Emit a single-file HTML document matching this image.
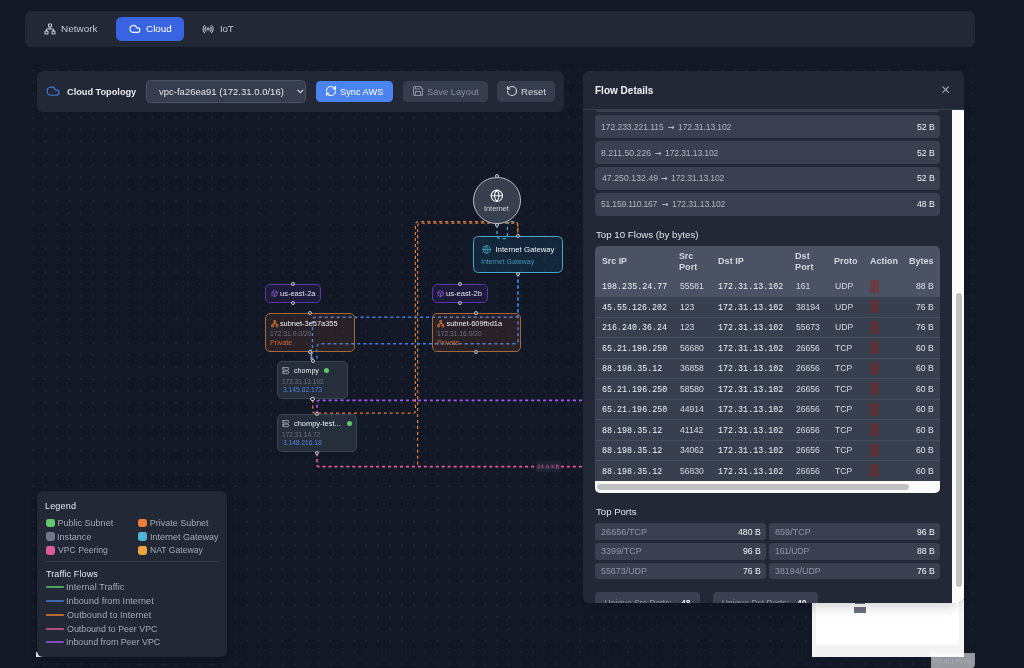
<!DOCTYPE html>
<html lang="en">
<head>
<meta charset="utf-8">
<title>Cloud Topology</title>
<style>
*{box-sizing:border-box;margin:0;padding:0}
html,body{width:1024px;height:668px;overflow:hidden;background:#121826}
body{position:relative;font-family:"Liberation Sans",sans-serif;color:#d1d5db}
#root{position:absolute;left:0;top:0;width:1024px;height:668px;will-change:transform}
.abs{position:absolute}
.t{position:absolute;white-space:nowrap;line-height:12px;height:12px}
.md{}
svg.ic{position:absolute;fill:none;stroke:currentColor;stroke-width:2.2;stroke-linecap:round;stroke-linejoin:round;overflow:visible}
#nav{left:25px;top:11px;width:950px;height:35.6px;background:#222836;border-radius:6px}
#cloudbtn{left:115.8px;top:16.8px;width:68.2px;height:24.2px;background:#3864e2;border-radius:5.5px}
#canvas{left:25px;top:70px;width:950px;height:598px;overflow:hidden}
#toolbar{left:36.7px;top:71px;width:527.6px;height:40.8px;background:#222836;border-radius:6px}
.btn{position:absolute;top:80.6px;height:21.3px;border-radius:4.5px;background:#363d4d}
#sel{left:146.2px;top:80.2px;width:160px;height:22.6px;background:#363d4d;border:1px solid #4a5162;border-radius:4.5px}
.node{position:absolute;border-radius:5px;border:1.2px solid}
.az{background:rgba(124,58,237,.10);border-color:#5d35a4;border-width:1.1px}
.sub{background:rgba(234,120,50,.10);border-color:#a2683d;border-width:1.1px}
.inst{background:#262d3b;border-color:#3b4354;border-width:1px}
.hd{position:absolute;width:4.2px;height:4.2px;border-radius:50%;background:#1b2130;border:0.85px solid #c8ccd4}
#legend{left:36.7px;top:491.1px;width:190.6px;height:165.9px;background:#222836;border-radius:6px;box-shadow:0 3px 6px rgba(4,6,12,.3)}
.sw{position:absolute;width:8.8px;height:8.8px;border-radius:2.4px}
.ln{position:absolute;left:45.8px;width:18.2px;height:1.5px;border-radius:1px}
#panel{left:583px;top:71px;width:380.8px;height:532px;background:#222836;border-radius:6px;overflow:hidden;box-shadow:0 11px 12px -8px rgba(4,6,12,.2)}
.row{position:absolute;left:595.3px;width:344.7px;height:22.5px;background:#3a4050;border-radius:4px}
.chip{position:absolute;height:16.5px;background:#3a4050;border-radius:3px}
</style>
</head>
<body>
<div id="root">
<!-- nav -->
<div id="nav" class="abs"></div>
<div id="cloudbtn" class="abs"></div>
<svg class="ic" style="left:43.50px;top:23.00px;color:#c3c8d1;stroke-width:2.3;" width="12" height="12" viewBox="0 0 24 24"><rect x="16" y="16" width="6" height="6" rx="1"/><rect x="2" y="16" width="6" height="6" rx="1"/><rect x="9" y="2" width="6" height="6" rx="1"/><path d="M5 16v-3a1 1 0 0 1 1-1h12a1 1 0 0 1 1 1v3"/><path d="M12 12V8"/></svg>
<span class="t" style="left:60.98px;top:22.52px;font-size:9.95px;color:#c3c8d1;transform:translateY(0.47px) rotate(.02deg);">Network</span>
<svg class="ic" style="left:128.50px;top:23.10px;color:#fff;stroke-width:2.3;" width="11.8" height="11.8" viewBox="0 0 24 24"><path d="M17.5 19H9a7 7 0 1 1 6.71-9h1.79a4.5 4.5 0 1 1 0 9Z"/></svg>
<span class="t" style="left:146.20px;top:22.52px;font-size:9.89px;color:#fff;transform:translateY(0.45px) rotate(.02deg);">Cloud</span>
<svg class="ic" style="left:202.00px;top:22.90px;color:#c3c8d1;stroke-width:2.0;" width="12.2" height="12.2" viewBox="0 0 24 24"><path d="M4.9 19.1C1 15.2 1 8.8 4.9 4.9"/><path d="M7.8 16.2c-2.3-2.3-2.3-6.1 0-8.5"/><circle cx="12" cy="12" r="2"/><path d="M16.2 7.8c2.3 2.3 2.3 6.1 0 8.5"/><path d="M19.1 4.9C23 8.8 23 15.1 19.1 19"/></svg>
<span class="t" style="left:219.90px;top:22.52px;font-size:9.8px;color:#c3c8d1;letter-spacing:-0.265px;transform:translateY(0.42px) rotate(.02deg);">IoT</span>
<!-- canvas -->
<div id="canvas" class="abs"><svg width="950" height="598" style="display:block"><defs><pattern id="dots" x="2.5" y="-6" width="11.886" height="11.886" patternUnits="userSpaceOnUse"><circle cx="5.94" cy="5.9" r="0.5" fill="#4c566e"/></pattern></defs><rect width="950" height="598" fill="url(#dots)"/></svg></div>
<!-- nodes -->
<svg class="abs" style="left:0;top:0" width="1024" height="668" fill="none" stroke-linecap="butt"><path d="M312.7,399.6 V411.2 Q312.7,413.2 314.7,413.2 H412.6 Q415.4,413.2 415.4,410.4 V224.9 Q415.4,221.7 418.6,221.7 H514.6 Q517.8,221.7 517.8,224.9 V235.7" stroke="#de7f35" stroke-width="1.25" stroke-dasharray="3.1 2.86" /><path d="M417.6,465 V226.2 Q417.6,223 420.8,223 H514.5 Q517.7,223 517.7,226.2 V235.7" stroke="#de7f35" stroke-width="1.25" stroke-dasharray="3.1 2.86" stroke-dashoffset="-0.3" /><path d="M497,225 V235.4 Q497,238.6 500.2,238.6 H504.2 Q507.4,238.6 507.4,235.4 V225.3 Q507.4,222.1 510.6,222.1 H514.5" stroke="#46a9c9" stroke-width="1.3" stroke-dasharray="3.1 2.86" /><path d="M518,273.6 V314 Q518,317.2 514.8,317.2 H315.7 Q312.5,317.2 312.5,320.4 V360.3" stroke="#467dd7" stroke-width="1.45" stroke-dasharray="3.1 2.86" /><path d="M518,273.6 V340.6 Q518,343.8 514.8,343.8 H320.2 Q317,343.8 317,347 V357 Q317,359.5 314.5,359.5" stroke="#467dd7" stroke-width="1.45" stroke-dasharray="3.1 2.86" /><path d="M311.3,349.5 V360" stroke="#8d93a0" stroke-width="1.7"  /><path d="M317,413.8 V402.3 Q317,400.3 319,400.3 H600" stroke="#a259ea" stroke-width="1.7" stroke-dasharray="3.1 2.86" /><path d="M317,453.1 V464.7 Q317,466.7 319,466.7 H600" stroke="#e15aa0" stroke-width="1.7" stroke-dasharray="3.1 2.86" /></svg>
<div class="abs" style="left:536.1px;top:461px;width:24.7px;height:11.2px;background:rgba(30,38,53,.88);border-radius:1.5px"></div>
<span class="t" style="left:537.30px;top:460.02px;font-size:6px;color:#c85596;letter-spacing:0.195px;transform:translateY(0.66px) rotate(.02deg);">24.6 KB</span>
<div class="abs" style="left:473.2px;top:177.1px;width:47.4px;height:47.4px;border-radius:50%;background:#383f4f;border:1.3px solid #b9bdc6"></div>
<svg class="ic" style="left:490.20px;top:189.10px;color:#f3f4f6;stroke-width:1.9;" width="13.6" height="13.6" viewBox="0 0 24 24"><circle cx="12" cy="12" r="10"/><path d="M2 12h20"/><path d="M12 2a15.3 15.3 0 0 1 4 10 15.3 15.3 0 0 1-4 10 15.3 15.3 0 0 1-4-10 15.3 15.3 0 0 1 4-10z"/></svg>
<span class="t" style="left:484.22px;top:201.52px;font-size:7.32px;color:#cfd3da;transform:translateY(0.92px) rotate(.02deg);">Internet</span>
<div class="hd" style="left:494.90px;top:174.30px"></div>
<div class="hd" style="left:494.90px;top:222.90px"></div>
<div class="node " style="left:473.30px;top:236.20px;width:90.00px;height:36.80px;background:rgba(40,150,190,.13);border-color:#46a9c9;border-width:1.6px;border-radius:5.5px"></div>
<svg class="ic" style="left:481.90px;top:244.90px;color:#46a9c9;stroke-width:2.0;" width="9" height="9" viewBox="0 0 24 24"><circle cx="12" cy="12" r="10"/><path d="M2 12h20"/><path d="M12 2a15.3 15.3 0 0 1 4 10 15.3 15.3 0 0 1-4 10 15.3 15.3 0 0 1-4-10 15.3 15.3 0 0 1 4-10z"/></svg>
<span class="t" style="left:495.48px;top:243.52px;font-size:7.76px;color:#eef0f3;">Internet Gateway</span>
<span class="t" style="left:481.15px;top:254.52px;font-size:6.99px;color:#3b93b8;transform:translateY(0.60px) rotate(.02deg);">Internet Gateway</span>
<div class="hd" style="left:515.90px;top:233.90px"></div>
<div class="hd" style="left:515.90px;top:271.70px"></div>
<div class="node az" style="left:265.20px;top:284.00px;width:55.40px;height:18.80px;"></div>
<svg class="ic" style="left:270.70px;top:289.80px;color:#9b63ea;stroke-width:2.3;" width="7.2" height="7.2" viewBox="0 0 24 24"><path d="M21 8a2 2 0 0 0-1-1.73l-7-4a2 2 0 0 0-2 0l-7 4A2 2 0 0 0 3 8v8a2 2 0 0 0 1 1.73l7 4a2 2 0 0 0 2 0l7-4A2 2 0 0 0 21 16Z"/><path d="m3.3 7 8.7 5 8.7-5"/><path d="M12 22V12"/></svg>
<span class="t" style="left:279.61px;top:287.52px;font-size:7.53px;color:#e6e2f3;transform:translateY(0.09px) rotate(.02deg);">us-east-2a</span>
<div class="hd" style="left:290.60px;top:281.50px"></div>
<div class="hd" style="left:290.60px;top:301.20px"></div>
<div class="node az" style="left:431.80px;top:284.00px;width:55.90px;height:18.80px;"></div>
<svg class="ic" style="left:437.30px;top:289.80px;color:#9b63ea;stroke-width:2.3;" width="7.2" height="7.2" viewBox="0 0 24 24"><path d="M21 8a2 2 0 0 0-1-1.73l-7-4a2 2 0 0 0-2 0l-7 4A2 2 0 0 0 3 8v8a2 2 0 0 0 1 1.73l7 4a2 2 0 0 0 2 0l7-4A2 2 0 0 0 21 16Z"/><path d="m3.3 7 8.7 5 8.7-5"/><path d="M12 22V12"/></svg>
<span class="t" style="left:446.41px;top:287.52px;font-size:7.6px;color:#e6e2f3;transform:translateY(0.11px) rotate(.02deg);">us-east-2b</span>
<div class="hd" style="left:457.50px;top:281.50px"></div>
<div class="hd" style="left:457.50px;top:301.20px"></div>
<div class="node sub" style="left:265.20px;top:313.30px;width:89.50px;height:38.60px;"></div>
<svg class="ic" style="left:270.50px;top:319.70px;color:#d27735;stroke-width:2.9;" width="7.6" height="7.6" viewBox="0 0 24 24"><rect x="16" y="16" width="6" height="6" rx="1"/><rect x="2" y="16" width="6" height="6" rx="1"/><rect x="9" y="2" width="6" height="6" rx="1"/><path d="M5 16v-3a1 1 0 0 1 1-1h12a1 1 0 0 1 1 1v3"/><path d="M12 12V8"/></svg>
<span class="t" style="left:279.89px;top:317.52px;font-size:7.41px;color:#eef0f3;">subnet-3e57a355</span>
<span class="t" style="left:270.28px;top:327.52px;font-size:6.8px;color:#6c7283;transform:translateY(0.34px) rotate(.02deg);">172.31.0.0/20</span>
<span class="t" style="left:270.21px;top:337.02px;font-size:7.17px;color:#c86a32;transform:translateY(0.27px) rotate(.02deg);">Private</span>
<div class="hd" style="left:307.70px;top:310.90px"></div>
<div class="hd" style="left:307.70px;top:349.90px"></div>
<div class="node sub" style="left:431.80px;top:313.30px;width:88.90px;height:38.60px;"></div>
<svg class="ic" style="left:437.10px;top:319.70px;color:#d27735;stroke-width:2.9;" width="7.6" height="7.6" viewBox="0 0 24 24"><rect x="16" y="16" width="6" height="6" rx="1"/><rect x="2" y="16" width="6" height="6" rx="1"/><rect x="9" y="2" width="6" height="6" rx="1"/><path d="M5 16v-3a1 1 0 0 1 1-1h12a1 1 0 0 1 1 1v3"/><path d="M12 12V8"/></svg>
<span class="t" style="left:446.49px;top:317.52px;font-size:7.41px;color:#eef0f3;">subnet-609fbd1a</span>
<span class="t" style="left:436.89px;top:327.52px;font-size:6.71px;color:#6c7283;transform:translateY(0.31px) rotate(.02deg);">172.31.16.0/20</span>
<span class="t" style="left:436.81px;top:337.02px;font-size:7.17px;color:#c86a32;transform:translateY(0.27px) rotate(.02deg);">Private</span>
<div class="hd" style="left:474.10px;top:310.90px"></div>
<div class="hd" style="left:474.10px;top:349.90px"></div>
<div class="node inst" style="left:277.30px;top:361.30px;width:71.10px;height:37.50px;"></div>
<svg class="ic" style="left:282.30px;top:367.10px;color:#c3c8d1;stroke-width:2.2;" width="7.2" height="7.2" viewBox="0 0 24 24"><rect width="20" height="8" x="2" y="2" rx="2" ry="2"/><rect width="20" height="8" x="2" y="14" rx="2" ry="2"/><path d="M6 6h.01"/><path d="M6 18h.01"/></svg>
<span class="t" style="left:294.20px;top:365.02px;font-size:7.12px;color:#eef0f3;transform:translateY(0.15px) rotate(.02deg);">chompy</span>
<div class="abs" style="left:324.10px;top:368.10px;width:5.2px;height:5.2px;border-radius:50%;background:#5fca6b"></div>
<span class="t" style="left:282.30px;top:374.52px;font-size:6.51px;color:#6c7283;transform:translateY(0.84px) rotate(.02deg);">172.31.13.102</span>
<span class="t" style="left:282.54px;top:382.52px;font-size:6.72px;color:#4c82dc;transform:translateY(0.91px) rotate(.02deg);">3.145.82.173</span>
<div class="hd" style="left:310.70px;top:358.70px"></div>
<div class="hd" style="left:310.40px;top:397.20px"></div>
<div class="node inst" style="left:277.30px;top:414.30px;width:79.40px;height:38.10px;"></div>
<svg class="ic" style="left:282.30px;top:420.10px;color:#c3c8d1;stroke-width:2.2;" width="7.2" height="7.2" viewBox="0 0 24 24"><rect width="20" height="8" x="2" y="2" rx="2" ry="2"/><rect width="20" height="8" x="2" y="14" rx="2" ry="2"/><path d="M6 6h.01"/><path d="M6 18h.01"/></svg>
<span class="t" style="left:294.18px;top:417.52px;font-size:7.45px;color:#eef0f3;transform:translateY(0.26px) rotate(.02deg);">chompy-test...</span>
<div class="abs" style="left:346.50px;top:421.10px;width:5.2px;height:5.2px;border-radius:50%;background:#5fca6b"></div>
<span class="t" style="left:282.30px;top:427.52px;font-size:6.55px;color:#6c7283;transform:translateY(0.85px) rotate(.02deg);">172.31.14.72</span>
<span class="t" style="left:282.55px;top:435.52px;font-size:6.62px;color:#4c82dc;transform:translateY(0.88px) rotate(.02deg);">3.148.216.18</span>
<div class="hd" style="left:314.90px;top:411.70px"></div>
<div class="hd" style="left:314.90px;top:450.80px"></div>
<!-- toolbar -->
<div id="toolbar" class="abs"></div>
<svg class="ic" style="left:46.20px;top:84.10px;color:#4678dc;stroke-width:2.0;" width="14.2" height="14.2" viewBox="0 0 24 24"><path d="M17.5 19H9a7 7 0 1 1 6.71-9h1.79a4.5 4.5 0 1 1 0 9Z"/></svg>
<span class="t" style="left:66.82px;top:85.02px;font-size:9.2px;color:#e8eaee;font-weight:bold;transform:translateY(0.66px) rotate(.02deg);">Cloud Topology</span>
<div id="sel" class="abs"></div>
<span class="t" style="left:158.97px;top:84.52px;font-size:9.52px;color:#e4e6ea;transform:translateY(0.77px) rotate(.02deg);">vpc-fa26ea91 (172.31.0.0/16)</span>
<svg class="ic" style="left:295.70px;top:87.20px;color:#e1e4e9;stroke-width:3.1;" width="8.6" height="8.6" viewBox="0 0 24 24"><path d="m5 8.5 7 7 7-7"/></svg>
<div class="btn" style="left:315.5px;width:77.6px;background:#4b84f0"></div>
<svg class="ic" style="left:324.80px;top:85.30px;color:#fff;stroke-width:2.3;" width="12" height="12" viewBox="0 0 24 24"><path d="M3 12a9 9 0 0 1 9-9 9.75 9.75 0 0 1 6.74 2.74L21 8"/><path d="M21 3v5h-5"/><path d="M21 12a9 9 0 0 1-9 9 9.75 9.75 0 0 1-6.74-2.74L3 16"/><path d="M8 16H3v5"/></svg>
<span class="t" style="left:339.78px;top:85.02px;font-size:9.26px;color:#fff;transform:translateY(0.69px) rotate(.02deg);">Sync AWS</span>
<div class="btn" style="left:402.5px;width:85.6px"></div>
<svg class="ic" style="left:411.50px;top:85.30px;color:#8a909d;stroke-width:2.2;" width="12" height="12" viewBox="0 0 24 24"><path d="M19 21H5a2 2 0 0 1-2-2V5a2 2 0 0 1 2-2h11l5 5v11a2 2 0 0 1-2 2z"/><path d="M17 21v-8H7v8"/><path d="M7 3v5h8"/></svg>
<span class="t" style="left:426.58px;top:85.02px;font-size:9.3px;color:#878d9a;transform:translateY(0.70px) rotate(.02deg);">Save Layout</span>
<div class="btn" style="left:497px;width:58px"></div>
<svg class="ic" style="left:506.10px;top:85.30px;color:#d5d8de;stroke-width:2.3;" width="12" height="12" viewBox="0 0 24 24"><path d="M3 12a9 9 0 1 0 9-9 9.75 9.75 0 0 0-6.74 2.74L3 8"/><path d="M3 3v5h5"/></svg>
<span class="t" style="left:520.61px;top:84.52px;font-size:9.59px;color:#d5d8de;transform:translateY(0.80px) rotate(.02deg);">Reset</span>
<!-- legend -->
<div class="abs" style="left:36.2px;top:651.5px;width:8px;height:5.5px;background:#fff"></div>
<div id="legend" class="abs"></div>
<span class="t md" style="left:45.16px;top:500.02px;font-size:9.0px;color:#e6e8ec;letter-spacing:0.177px;transform:translateY(0.10px) rotate(.02deg);">Legend</span>
<div class="sw" style="left:45.8px;top:518.50px;background:#62c66c"></div>
<span class="t" style="left:57.46px;top:517.02px;font-size:9.0px;color:#a3a9b5;letter-spacing:0.014px;">Public Subnet</span>
<div class="sw" style="left:138.3px;top:518.50px;background:#eb7d37"></div>
<span class="t" style="left:149.86px;top:517.02px;font-size:8.96px;color:#a3a9b5;">Private Subnet</span>
<div class="sw" style="left:45.8px;top:532.20px;background:#70778a"></div>
<span class="t" style="left:57.37px;top:530.02px;font-size:9.0px;color:#a3a9b5;letter-spacing:0.058px;transform:translateY(0.70px) rotate(.02deg);">Instance</span>
<div class="sw" style="left:138.3px;top:532.20px;background:#50b4d4"></div>
<span class="t" style="left:149.77px;top:530.02px;font-size:8.99px;color:#a3a9b5;transform:translateY(0.69px) rotate(.02deg);">Internet Gateway</span>
<div class="sw" style="left:45.8px;top:545.90px;background:#de589c"></div>
<span class="t" style="left:58.16px;top:544.02px;font-size:8.65px;color:#a3a9b5;transform:translateY(0.28px) rotate(.02deg);">VPC Peering</span>
<div class="sw" style="left:138.3px;top:545.90px;background:#eca43c"></div>
<span class="t" style="left:149.89px;top:544.02px;font-size:8.62px;color:#a3a9b5;transform:translateY(0.27px) rotate(.02deg);">NAT Gateway</span>
<div class="abs" style="left:45.8px;top:561.4px;width:172.3px;height:1px;background:#363d4c"></div>
<span class="t md" style="left:45.70px;top:567.02px;font-size:9.0px;color:#e6e8ec;letter-spacing:0.102px;transform:translateY(0.90px) rotate(.02deg);">Traffic Flows</span>
<svg class="abs" style="left:45px;top:584.30px" width="20" height="6"><path d="M1.6,3H18.4" stroke="#62c66c" stroke-width="1.45" stroke-linecap="round"/></svg>
<span class="t" style="left:66.27px;top:581.02px;font-size:9.0px;color:#a3a9b5;letter-spacing:0.097px;transform:translateY(0.40px) rotate(.02deg);">Internal Traffic</span>
<svg class="abs" style="left:45px;top:598.00px" width="20" height="6"><path d="M1.6,3H18.4" stroke="#467dd7" stroke-width="1.45" stroke-linecap="round"/></svg>
<span class="t" style="left:66.27px;top:595.02px;font-size:9.0px;color:#a3a9b5;letter-spacing:0.082px;transform:translateY(0.10px) rotate(.02deg);">Inbound from Internet</span>
<svg class="abs" style="left:45px;top:611.70px" width="20" height="6"><path d="M1.6,3H18.4" stroke="#eb7d37" stroke-width="1.45" stroke-linecap="round"/></svg>
<span class="t" style="left:66.67px;top:608.02px;font-size:9.0px;color:#a3a9b5;letter-spacing:0.086px;transform:translateY(0.80px) rotate(.02deg);">Outbound to Internet</span>
<svg class="abs" style="left:45px;top:625.50px" width="20" height="6"><path d="M1.6,3H18.4" stroke="#de589c" stroke-width="1.45" stroke-linecap="round"/></svg>
<span class="t" style="left:66.68px;top:622.02px;font-size:8.86px;color:#a3a9b5;transform:translateY(0.55px) rotate(.02deg);">Outbound to Peer VPC</span>
<svg class="abs" style="left:45px;top:639.20px" width="20" height="6"><path d="M1.6,3H18.4" stroke="#a259ea" stroke-width="1.45" stroke-linecap="round"/></svg>
<span class="t" style="left:66.28px;top:636.02px;font-size:8.89px;color:#a3a9b5;transform:translateY(0.26px) rotate(.02deg);">Inbound from Peer VPC</span>
<!-- minimap -->
<div class="abs" style="left:811.8px;top:560px;width:152px;height:96.8px;background:#f3f3f4"></div>
<div class="abs" style="left:816.3px;top:560px;width:143px;height:85px;background:#fff"></div>
<div class="abs" style="left:854.3px;top:607px;width:11.7px;height:6px;background:#697082"></div>
<div class="abs" style="left:855px;top:600px;width:10px;height:4.2px;background:#697082"></div>
<div class="abs" style="left:931.1px;top:652.8px;width:44px;height:16px;background:rgba(255,255,255,.56);border-radius:0 0 5px 0"></div>
<span class="t" style="left:932.75px;top:654.52px;font-size:7.96px;color:#a9abb3;transform:translateY(0.34px) rotate(.02deg);">React Flow</span>
<!-- panel -->
<div id="panel" class="abs"></div>
<div class="row" style="top:89.5px"></div>
<div class="row" style="top:115.3px"></div>
<span class="t" style="left:601.04px;top:120.02px;font-size:8.6px;color:#b0b5bf;letter-spacing:-0.075px;transform:translateY(0.66px) rotate(.02deg);">172.233.221.115</span>
<span class="t" style="left:667.93px;top:120.02px;font-size:8.2px;color:#b0b5bf;font-weight:bold;font-family:'DejaVu Sans',sans-serif;transform:translateY(0.69px) rotate(.02deg);">→</span>
<span class="t" style="left:678.04px;top:120.02px;font-size:8.6px;color:#b0b5bf;letter-spacing:-0.134px;transform:translateY(0.66px) rotate(.02deg);">172.31.13.102</span>
<span class="t md" style="left:916.76px;top:120.02px;font-size:8.7px;color:#f2f3f5;transform:translateY(0.69px) rotate(.02deg);">52 B</span>
<div class="row" style="top:141.2px"></div>
<span class="t" style="left:601.33px;top:146.02px;font-size:8.6px;color:#b0b5bf;letter-spacing:0.040px;transform:translateY(0.56px) rotate(.02deg);">8.211.50.226</span>
<span class="t" style="left:655.33px;top:146.02px;font-size:8.2px;color:#b0b5bf;font-weight:bold;font-family:'DejaVu Sans',sans-serif;transform:translateY(0.59px) rotate(.02deg);">→</span>
<span class="t" style="left:665.44px;top:146.02px;font-size:8.6px;color:#b0b5bf;letter-spacing:-0.134px;transform:translateY(0.56px) rotate(.02deg);">172.31.13.102</span>
<span class="t md" style="left:916.76px;top:146.02px;font-size:8.7px;color:#f2f3f5;transform:translateY(0.59px) rotate(.02deg);">52 B</span>
<div class="row" style="top:167.1px"></div>
<span class="t" style="left:601.50px;top:172.02px;font-size:8.6px;color:#b0b5bf;letter-spacing:0.092px;transform:translateY(0.46px) rotate(.02deg);">47.250.132.49</span>
<span class="t" style="left:660.93px;top:172.02px;font-size:8.2px;color:#b0b5bf;font-weight:bold;font-family:'DejaVu Sans',sans-serif;transform:translateY(0.49px) rotate(.02deg);">→</span>
<span class="t" style="left:671.04px;top:172.02px;font-size:8.6px;color:#b0b5bf;letter-spacing:-0.134px;transform:translateY(0.46px) rotate(.02deg);">172.31.13.102</span>
<span class="t md" style="left:916.76px;top:172.02px;font-size:8.7px;color:#f2f3f5;transform:translateY(0.49px) rotate(.02deg);">52 B</span>
<div class="row" style="top:193px"></div>
<span class="t" style="left:601.36px;top:198.02px;font-size:8.6px;color:#b0b5bf;letter-spacing:-0.208px;transform:translateY(0.36px) rotate(.02deg);">51.159.110.167</span>
<span class="t" style="left:661.73px;top:198.02px;font-size:8.2px;color:#b0b5bf;font-weight:bold;font-family:'DejaVu Sans',sans-serif;transform:translateY(0.39px) rotate(.02deg);">→</span>
<span class="t" style="left:671.84px;top:198.02px;font-size:8.6px;color:#b0b5bf;letter-spacing:-0.134px;transform:translateY(0.36px) rotate(.02deg);">172.31.13.102</span>
<span class="t md" style="left:916.76px;top:198.02px;font-size:8.7px;color:#f2f3f5;transform:translateY(0.39px) rotate(.02deg);">48 B</span>
<div class="abs" style="left:583px;top:71px;width:380.8px;height:38.7px;background:#222836;border-radius:6px 6px 0 0;border-bottom:1px solid #363d4c"></div>
<span class="t" style="left:594.93px;top:83.52px;font-size:10.02px;color:#eef0f3;font-weight:bold;transform:translateY(0.85px) rotate(.02deg);">Flow Details</span>
<svg class="ic" style="left:940.20px;top:84.10px;color:#a0a6b2;stroke-width:2.5;" width="11.2" height="11.2" viewBox="0 0 24 24"><path d="M18 6 6 18"/><path d="m6 6 12 12"/></svg>
<div class="abs" style="left:952px;top:109.6px;width:11.8px;height:493.4px;background:#fafafa;border-radius:0 0 6px 0"></div>
<div class="abs" style="left:955.9px;top:292.5px;width:5.7px;height:294.5px;background:#c1c1c1;border-radius:3px"></div>
<span class="t md" style="left:595.68px;top:227.52px;font-size:9.71px;color:#e1e4e9;transform:translateY(0.64px) rotate(.02deg);">Top 10 Flows (by bytes)</span>
<div class="abs" style="left:595.3px;top:246px;width:344.7px;height:246.8px;background:#383f4f;border-radius:5px;overflow:hidden"><div class="abs" style="left:0;top:0;width:100%;height:30.3px;background:#4b5263"></div><div class="abs" style="left:0;top:30.3px;width:100%;height:20.5px;background:#4b5263"></div><div class="abs" style="left:0;top:70.80px;width:100%;height:1px;background:#464d5d"></div><div class="abs" style="left:0;top:91.30px;width:100%;height:1px;background:#464d5d"></div><div class="abs" style="left:0;top:111.80px;width:100%;height:1px;background:#464d5d"></div><div class="abs" style="left:0;top:132.30px;width:100%;height:1px;background:#464d5d"></div><div class="abs" style="left:0;top:152.80px;width:100%;height:1px;background:#464d5d"></div><div class="abs" style="left:0;top:173.30px;width:100%;height:1px;background:#464d5d"></div><div class="abs" style="left:0;top:193.80px;width:100%;height:1px;background:#464d5d"></div><div class="abs" style="left:0;top:214.30px;width:100%;height:1px;background:#464d5d"></div><div class="abs" style="left:0;top:234.8px;width:100%;height:12px;background:#fafafa"></div><div class="abs" style="left:1.7px;top:237.7px;width:312.5px;height:6.3px;background:#c1c1c1;border-radius:3.2px"></div></div>
<span class="t" style="left:601.55px;top:255.02px;font-size:8.8px;color:#d4d7dd;font-weight:bold;transform:translateY(0.33px) rotate(.02deg);">Src IP</span>
<span class="t" style="left:679.35px;top:250.02px;font-size:8.75px;color:#d4d7dd;font-weight:bold;transform:translateY(0.21px) rotate(.02deg);">Src</span>
<span class="t" style="left:678.99px;top:261.02px;font-size:9.1px;color:#d4d7dd;font-weight:bold;letter-spacing:0.040px;transform:translateY(0.13px) rotate(.02deg);">Port</span>
<span class="t" style="left:717.69px;top:255.02px;font-size:9.1px;color:#d4d7dd;font-weight:bold;letter-spacing:0.006px;transform:translateY(0.43px) rotate(.02deg);">Dst IP</span>
<span class="t" style="left:795.39px;top:250.02px;font-size:9.1px;color:#d4d7dd;font-weight:bold;letter-spacing:0.028px;transform:translateY(0.33px) rotate(.02deg);">Dst</span>
<span class="t" style="left:795.39px;top:261.02px;font-size:9.1px;color:#d4d7dd;font-weight:bold;letter-spacing:0.073px;transform:translateY(0.13px) rotate(.02deg);">Port</span>
<span class="t" style="left:833.99px;top:255.02px;font-size:9.06px;color:#d4d7dd;font-weight:bold;transform:translateY(0.42px) rotate(.02deg);">Proto</span>
<span class="t" style="left:869.88px;top:255.02px;font-size:8.99px;color:#d4d7dd;font-weight:bold;transform:translateY(0.39px) rotate(.02deg);">Action</span>
<span class="t" style="left:909.19px;top:255.02px;font-size:9.06px;color:#d4d7dd;font-weight:bold;transform:translateY(0.42px) rotate(.02deg);">Bytes</span>
<span class="t md" style="left:601.90px;top:281.02px;font-size:8.33px;color:#f1f2f5;letter-spacing:0.031px;font-family:'Liberation Mono',monospace;transform:translateY(0.30px) rotate(.02deg);">198.235.24.77</span>
<span class="t" style="left:679.90px;top:280.02px;font-size:8.6px;color:#d6d9df;transform:translateY(0.30px) rotate(.02deg);">55581</span>
<span class="t md" style="left:718.20px;top:281.02px;font-size:8.33px;color:#f1f2f5;letter-spacing:0.026px;font-family:'Liberation Mono',monospace;transform:translateY(0.30px) rotate(.02deg);">172.31.13.102</span>
<span class="t" style="left:796.20px;top:280.02px;font-size:8.6px;color:#d6d9df;transform:translateY(0.30px) rotate(.02deg);">161</span>
<span class="t" style="left:834.50px;top:280.02px;font-size:8.6px;color:#d6d9df;transform:translateY(0.30px) rotate(.02deg);">UDP</span>
<div class="abs" style="left:870px;top:279.80px;width:8.8px;height:13.2px;border-radius:2.6px;background:#6a3c43"></div>
<span class="t" style="left:916.36px;top:280.02px;font-size:8.6px;color:#dfe2e7;transform:translateY(0.30px) rotate(.02deg);">88 B</span>
<span class="t md" style="left:602.08px;top:301.02px;font-size:8.33px;color:#f1f2f5;letter-spacing:0.010px;font-family:'Liberation Mono',monospace;transform:translateY(0.80px) rotate(.02deg);">45.55.126.202</span>
<span class="t" style="left:679.90px;top:300.02px;font-size:8.6px;color:#d6d9df;transform:translateY(0.80px) rotate(.02deg);">123</span>
<span class="t md" style="left:718.20px;top:301.02px;font-size:8.33px;color:#f1f2f5;letter-spacing:0.026px;font-family:'Liberation Mono',monospace;transform:translateY(0.80px) rotate(.02deg);">172.31.13.102</span>
<span class="t" style="left:796.20px;top:300.02px;font-size:8.6px;color:#d6d9df;transform:translateY(0.80px) rotate(.02deg);">38194</span>
<span class="t" style="left:834.50px;top:300.02px;font-size:8.6px;color:#d6d9df;transform:translateY(0.80px) rotate(.02deg);">UDP</span>
<div class="abs" style="left:870px;top:300.30px;width:8.8px;height:13.2px;border-radius:2.6px;background:#5a3339"></div>
<span class="t" style="left:916.36px;top:300.02px;font-size:8.6px;color:#dfe2e7;transform:translateY(0.80px) rotate(.02deg);">76 B</span>
<span class="t md" style="left:601.91px;top:322.02px;font-size:8.33px;color:#f1f2f5;letter-spacing:0.010px;font-family:'Liberation Mono',monospace;transform:translateY(0.30px) rotate(.02deg);">216.240.36.24</span>
<span class="t" style="left:679.90px;top:321.02px;font-size:8.6px;color:#d6d9df;transform:translateY(0.30px) rotate(.02deg);">123</span>
<span class="t md" style="left:718.20px;top:322.02px;font-size:8.33px;color:#f1f2f5;letter-spacing:0.026px;font-family:'Liberation Mono',monospace;transform:translateY(0.30px) rotate(.02deg);">172.31.13.102</span>
<span class="t" style="left:796.20px;top:321.02px;font-size:8.6px;color:#d6d9df;transform:translateY(0.30px) rotate(.02deg);">55673</span>
<span class="t" style="left:834.50px;top:321.02px;font-size:8.6px;color:#d6d9df;transform:translateY(0.30px) rotate(.02deg);">UDP</span>
<div class="abs" style="left:870px;top:320.80px;width:8.8px;height:13.2px;border-radius:2.6px;background:#5a3339"></div>
<span class="t" style="left:916.36px;top:321.02px;font-size:8.6px;color:#dfe2e7;transform:translateY(0.30px) rotate(.02deg);">76 B</span>
<span class="t md" style="left:601.89px;top:342.02px;font-size:8.33px;color:#f1f2f5;letter-spacing:0.020px;font-family:'Liberation Mono',monospace;transform:translateY(0.80px) rotate(.02deg);">65.21.196.250</span>
<span class="t" style="left:679.90px;top:341.02px;font-size:8.6px;color:#d6d9df;transform:translateY(0.80px) rotate(.02deg);">56680</span>
<span class="t md" style="left:718.20px;top:342.02px;font-size:8.33px;color:#f1f2f5;letter-spacing:0.026px;font-family:'Liberation Mono',monospace;transform:translateY(0.80px) rotate(.02deg);">172.31.13.102</span>
<span class="t" style="left:796.20px;top:341.02px;font-size:8.6px;color:#d6d9df;transform:translateY(0.80px) rotate(.02deg);">26656</span>
<span class="t" style="left:834.50px;top:341.02px;font-size:8.6px;color:#d6d9df;transform:translateY(0.80px) rotate(.02deg);">TCP</span>
<div class="abs" style="left:870px;top:341.30px;width:8.8px;height:13.2px;border-radius:2.6px;background:#5a3339"></div>
<span class="t" style="left:916.36px;top:341.02px;font-size:8.6px;color:#dfe2e7;transform:translateY(0.80px) rotate(.02deg);">60 B</span>
<span class="t md" style="left:601.96px;top:363.02px;font-size:8.33px;color:#f1f2f5;letter-spacing:0.022px;font-family:'Liberation Mono',monospace;transform:translateY(0.30px) rotate(.02deg);">88.198.35.12</span>
<span class="t" style="left:679.90px;top:362.02px;font-size:8.6px;color:#d6d9df;transform:translateY(0.30px) rotate(.02deg);">36858</span>
<span class="t md" style="left:718.20px;top:363.02px;font-size:8.33px;color:#f1f2f5;letter-spacing:0.026px;font-family:'Liberation Mono',monospace;transform:translateY(0.30px) rotate(.02deg);">172.31.13.102</span>
<span class="t" style="left:796.20px;top:362.02px;font-size:8.6px;color:#d6d9df;transform:translateY(0.30px) rotate(.02deg);">26656</span>
<span class="t" style="left:834.50px;top:362.02px;font-size:8.6px;color:#d6d9df;transform:translateY(0.30px) rotate(.02deg);">TCP</span>
<div class="abs" style="left:870px;top:361.80px;width:8.8px;height:13.2px;border-radius:2.6px;background:#5a3339"></div>
<span class="t" style="left:916.36px;top:362.02px;font-size:8.6px;color:#dfe2e7;transform:translateY(0.30px) rotate(.02deg);">60 B</span>
<span class="t md" style="left:601.89px;top:383.02px;font-size:8.33px;color:#f1f2f5;letter-spacing:0.020px;font-family:'Liberation Mono',monospace;transform:translateY(0.80px) rotate(.02deg);">65.21.196.250</span>
<span class="t" style="left:679.90px;top:382.02px;font-size:8.6px;color:#d6d9df;transform:translateY(0.80px) rotate(.02deg);">58580</span>
<span class="t md" style="left:718.20px;top:383.02px;font-size:8.33px;color:#f1f2f5;letter-spacing:0.026px;font-family:'Liberation Mono',monospace;transform:translateY(0.80px) rotate(.02deg);">172.31.13.102</span>
<span class="t" style="left:796.20px;top:382.02px;font-size:8.6px;color:#d6d9df;transform:translateY(0.80px) rotate(.02deg);">26656</span>
<span class="t" style="left:834.50px;top:382.02px;font-size:8.6px;color:#d6d9df;transform:translateY(0.80px) rotate(.02deg);">TCP</span>
<div class="abs" style="left:870px;top:382.30px;width:8.8px;height:13.2px;border-radius:2.6px;background:#5a3339"></div>
<span class="t" style="left:916.36px;top:382.02px;font-size:8.6px;color:#dfe2e7;transform:translateY(0.80px) rotate(.02deg);">60 B</span>
<span class="t md" style="left:601.89px;top:404.02px;font-size:8.33px;color:#f1f2f5;letter-spacing:0.020px;font-family:'Liberation Mono',monospace;transform:translateY(0.30px) rotate(.02deg);">65.21.196.250</span>
<span class="t" style="left:679.90px;top:403.02px;font-size:8.6px;color:#d6d9df;transform:translateY(0.30px) rotate(.02deg);">44914</span>
<span class="t md" style="left:718.20px;top:404.02px;font-size:8.33px;color:#f1f2f5;letter-spacing:0.026px;font-family:'Liberation Mono',monospace;transform:translateY(0.30px) rotate(.02deg);">172.31.13.102</span>
<span class="t" style="left:796.20px;top:403.02px;font-size:8.6px;color:#d6d9df;transform:translateY(0.30px) rotate(.02deg);">26656</span>
<span class="t" style="left:834.50px;top:403.02px;font-size:8.6px;color:#d6d9df;transform:translateY(0.30px) rotate(.02deg);">TCP</span>
<div class="abs" style="left:870px;top:402.80px;width:8.8px;height:13.2px;border-radius:2.6px;background:#5a3339"></div>
<span class="t" style="left:916.36px;top:403.02px;font-size:8.6px;color:#dfe2e7;transform:translateY(0.30px) rotate(.02deg);">60 B</span>
<span class="t md" style="left:601.96px;top:424.02px;font-size:8.33px;color:#f1f2f5;letter-spacing:0.022px;font-family:'Liberation Mono',monospace;transform:translateY(0.80px) rotate(.02deg);">88.198.35.12</span>
<span class="t" style="left:679.90px;top:423.02px;font-size:8.6px;color:#d6d9df;transform:translateY(0.80px) rotate(.02deg);">41142</span>
<span class="t md" style="left:718.20px;top:424.02px;font-size:8.33px;color:#f1f2f5;letter-spacing:0.026px;font-family:'Liberation Mono',monospace;transform:translateY(0.80px) rotate(.02deg);">172.31.13.102</span>
<span class="t" style="left:796.20px;top:423.02px;font-size:8.6px;color:#d6d9df;transform:translateY(0.80px) rotate(.02deg);">26656</span>
<span class="t" style="left:834.50px;top:423.02px;font-size:8.6px;color:#d6d9df;transform:translateY(0.80px) rotate(.02deg);">TCP</span>
<div class="abs" style="left:870px;top:423.30px;width:8.8px;height:13.2px;border-radius:2.6px;background:#5a3339"></div>
<span class="t" style="left:916.36px;top:423.02px;font-size:8.6px;color:#dfe2e7;transform:translateY(0.80px) rotate(.02deg);">60 B</span>
<span class="t md" style="left:601.96px;top:445.02px;font-size:8.33px;color:#f1f2f5;letter-spacing:0.022px;font-family:'Liberation Mono',monospace;transform:translateY(0.30px) rotate(.02deg);">88.198.35.12</span>
<span class="t" style="left:679.90px;top:444.02px;font-size:8.6px;color:#d6d9df;transform:translateY(0.30px) rotate(.02deg);">34062</span>
<span class="t md" style="left:718.20px;top:445.02px;font-size:8.33px;color:#f1f2f5;letter-spacing:0.026px;font-family:'Liberation Mono',monospace;transform:translateY(0.30px) rotate(.02deg);">172.31.13.102</span>
<span class="t" style="left:796.20px;top:444.02px;font-size:8.6px;color:#d6d9df;transform:translateY(0.30px) rotate(.02deg);">26656</span>
<span class="t" style="left:834.50px;top:444.02px;font-size:8.6px;color:#d6d9df;transform:translateY(0.30px) rotate(.02deg);">TCP</span>
<div class="abs" style="left:870px;top:443.80px;width:8.8px;height:13.2px;border-radius:2.6px;background:#5a3339"></div>
<span class="t" style="left:916.36px;top:444.02px;font-size:8.6px;color:#dfe2e7;transform:translateY(0.30px) rotate(.02deg);">60 B</span>
<span class="t md" style="left:601.96px;top:465.02px;font-size:8.33px;color:#f1f2f5;letter-spacing:0.022px;font-family:'Liberation Mono',monospace;transform:translateY(0.80px) rotate(.02deg);">88.198.35.12</span>
<span class="t" style="left:679.90px;top:464.02px;font-size:8.6px;color:#d6d9df;transform:translateY(0.80px) rotate(.02deg);">56830</span>
<span class="t md" style="left:718.20px;top:465.02px;font-size:8.33px;color:#f1f2f5;letter-spacing:0.026px;font-family:'Liberation Mono',monospace;transform:translateY(0.80px) rotate(.02deg);">172.31.13.102</span>
<span class="t" style="left:796.20px;top:464.02px;font-size:8.6px;color:#d6d9df;transform:translateY(0.80px) rotate(.02deg);">26656</span>
<span class="t" style="left:834.50px;top:464.02px;font-size:8.6px;color:#d6d9df;transform:translateY(0.80px) rotate(.02deg);">TCP</span>
<div class="abs" style="left:870px;top:464.30px;width:8.8px;height:13.2px;border-radius:2.6px;background:#5a3339"></div>
<span class="t" style="left:916.36px;top:464.02px;font-size:8.6px;color:#dfe2e7;transform:translateY(0.80px) rotate(.02deg);">60 B</span>
<span class="t md" style="left:595.68px;top:504.52px;font-size:9.61px;color:#e1e4e9;transform:translateY(0.61px) rotate(.02deg);">Top Ports</span>
<div class="chip" style="left:595.3px;top:523.3px;width:170.7px"></div>
<div class="chip" style="left:769.3px;top:523.3px;width:170.7px"></div>
<span class="t" style="left:601.35px;top:525.02px;font-size:9.0px;color:#8f96a3;letter-spacing:0.075px;transform:translateY(0.70px) rotate(.02deg);">26656/TCP</span>
<span class="t md" style="left:737.82px;top:525.02px;font-size:8.7px;color:#f2f3f5;transform:translateY(0.59px) rotate(.02deg);">480 B</span>
<span class="t" style="left:775.21px;top:525.02px;font-size:9.0px;color:#8f96a3;letter-spacing:0.042px;transform:translateY(0.70px) rotate(.02deg);">859/TCP</span>
<span class="t md" style="left:916.76px;top:525.02px;font-size:8.7px;color:#f2f3f5;transform:translateY(0.59px) rotate(.02deg);">96 B</span>
<div class="chip" style="left:595.3px;top:543px;width:170.7px"></div>
<div class="chip" style="left:769.3px;top:543px;width:170.7px"></div>
<span class="t" style="left:601.46px;top:545.02px;font-size:9.0px;color:#8f96a3;letter-spacing:0.042px;transform:translateY(0.40px) rotate(.02deg);">3399/TCP</span>
<span class="t md" style="left:742.66px;top:545.02px;font-size:8.7px;color:#f2f3f5;transform:translateY(0.29px) rotate(.02deg);">96 B</span>
<span class="t" style="left:774.94px;top:545.02px;font-size:8.6px;color:#8f96a3;letter-spacing:-0.098px;transform:translateY(0.26px) rotate(.02deg);">161/UDP</span>
<span class="t md" style="left:916.76px;top:545.02px;font-size:8.7px;color:#f2f3f5;transform:translateY(0.29px) rotate(.02deg);">88 B</span>
<div class="chip" style="left:595.3px;top:562.8px;width:170.7px"></div>
<div class="chip" style="left:769.3px;top:562.8px;width:170.7px"></div>
<span class="t" style="left:601.44px;top:565.02px;font-size:8.9px;color:#8f96a3;transform:translateY(0.16px) rotate(.02deg);">55673/UDP</span>
<span class="t md" style="left:742.66px;top:565.02px;font-size:8.7px;color:#f2f3f5;transform:translateY(0.09px) rotate(.02deg);">76 B</span>
<span class="t" style="left:775.26px;top:565.02px;font-size:8.84px;color:#8f96a3;transform:translateY(0.14px) rotate(.02deg);">38194/UDP</span>
<span class="t md" style="left:916.76px;top:565.02px;font-size:8.7px;color:#f2f3f5;transform:translateY(0.09px) rotate(.02deg);">76 B</span>
<div class="abs" style="left:583px;top:585px;width:369.5px;height:18px;overflow:hidden;border-radius:0 0 0 6px"><div class="chip" style="left:12.3px;top:6.5px;width:105px;height:25px;border-radius:4px"></div><div class="chip" style="left:129.5px;top:6.5px;width:105px;height:25px;border-radius:4px"></div><span class="t" style="left:21.5px;top:12px;font-size:8.6px;color:#8f96a3">Unique Src Ports:</span><span class="t" style="left:98px;top:12px;font-size:8.6px;color:#e6e8ec;font-weight:bold">48</span><span class="t" style="left:138.7px;top:12px;font-size:8.6px;color:#8f96a3">Unique Dst Ports:</span><span class="t" style="left:214px;top:12px;font-size:8.6px;color:#e6e8ec;font-weight:bold">40</span></div>
</div>
</body>
</html>
